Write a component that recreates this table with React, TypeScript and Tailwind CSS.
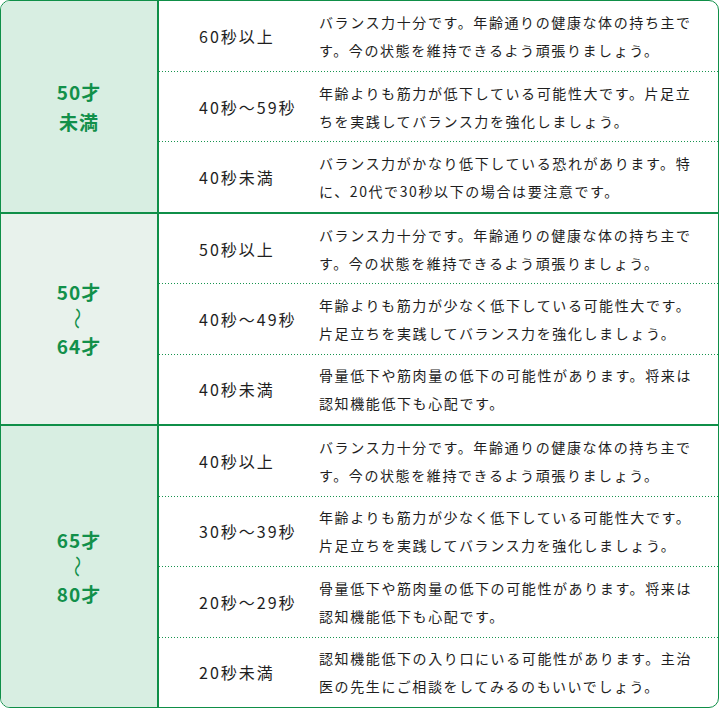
import React from "react";

type Row = { t: string; d: string[] };
type Group = { label: React.ReactNode; bg: string; h: string; rows: Row[] };

const Wave = () => (
  <span className="inline-block rotate-90 leading-none font-normal text-[22px] scale-y-75">～</span>
);

const groups: Group[] = [
  {
    label: (
      <>
        <div>50才</div>
        <div>未満</div>
      </>
    ),
    bg: "bg-[#d8eee2]",
    h: "h-[211px]",
    rows: [
      { t: "60秒以上", d: ["バランス力十分です。年齢通りの健康な体の持ち主で", "す。今の状態を維持できるよう頑張りましょう。"] },
      { t: "40秒～59秒", d: ["年齢よりも筋力が低下している可能性大です。片足立", "ちを実践してバランス力を強化しましょう。"] },
      { t: "40秒未満", d: ["バランス力がかなり低下している恐れがあります。特", "に、20代で30秒以下の場合は要注意です。"] },
    ],
  },
  {
    label: (
      <>
        <div>50才</div>
        <div className="h-[24px] flex items-center justify-center"><Wave /></div>
        <div>64才</div>
      </>
    ),
    bg: "bg-[#e8f2ec]",
    h: "h-[212px]",
    rows: [
      { t: "50秒以上", d: ["バランス力十分です。年齢通りの健康な体の持ち主で", "す。今の状態を維持できるよう頑張りましょう。"] },
      { t: "40秒～49秒", d: ["年齢よりも筋力が少なく低下している可能性大です。", "片足立ちを実践してバランス力を強化しましょう。"] },
      { t: "40秒未満", d: ["骨量低下や筋肉量の低下の可能性があります。将来は", "認知機能低下も心配です。"] },
    ],
  },
  {
    label: (
      <>
        <div>65才</div>
        <div className="h-[24px] flex items-center justify-center"><Wave /></div>
        <div>80才</div>
      </>
    ),
    bg: "bg-[#d8eee2]",
    h: "h-[283px]",
    rows: [
      { t: "40秒以上", d: ["バランス力十分です。年齢通りの健康な体の持ち主で", "す。今の状態を維持できるよう頑張りましょう。"] },
      { t: "30秒～39秒", d: ["年齢よりも筋力が少なく低下している可能性大です。", "片足立ちを実践してバランス力を強化しましょう。"] },
      { t: "20秒～29秒", d: ["骨量低下や筋肉量の低下の可能性があります。将来は", "認知機能低下も心配です。"] },
      { t: "20秒未満", d: ["認知機能低下の入り口にいる可能性があります。主治", "医の先生にご相談をしてみるのもいいでしょう。"] },
    ],
  },
];

const Dots = () => (
  <div className="h-px shrink-0 bg-[linear-gradient(to_right,#17944f_1px,transparent_1px)] bg-[length:3px_1px] bg-repeat-x" />
);

export default function App() {
  return (
    <div
      className="w-[719px] h-[708px] bg-white"
      style={{ fontFamily: '"Noto Sans CJK JP", "Noto Sans", sans-serif' }}
    >
      <div className="h-full border border-[#0f8f48] rounded-[10px] overflow-hidden flex flex-col">
        {groups.map((g, gi) => (
          <div key={gi} className={`flex shrink-0 ${g.h} ${gi > 0 ? "border-t-2 border-[#0f8f48]" : ""}`}>
            <div
              className={`w-[158px] shrink-0 border-r-2 border-[#0f8f48] ${g.bg} flex flex-col items-center justify-center text-[#12904a] font-bold text-[19px] leading-[30px] tracking-[1px]`}
            >
              {g.label}
            </div>
            <div className="flex-1 flex flex-col">
              {g.rows.map((r, ri) => (
                <React.Fragment key={ri}>
                  {ri > 0 && <Dots />}
                  <div className="flex items-center flex-1 text-[#1e1e1e]">
                    <div className="w-[160px] shrink-0 pl-[40px] text-[16px] tracking-[2px]">{r.t}</div>
                    <div className="flex-1 text-[14px] leading-[28px] tracking-[1.6px]">
                      {r.d.map((l, li) => (
                        <div key={li} className="whitespace-nowrap">{l}</div>
                      ))}
                    </div>
                  </div>
                </React.Fragment>
              ))}
            </div>
          </div>
        ))}
      </div>
    </div>
  );
}
